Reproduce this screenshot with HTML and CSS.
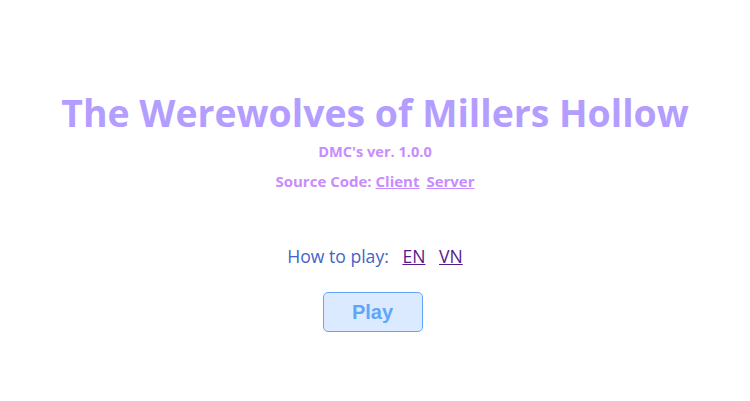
FILE: index.html
```html
<!DOCTYPE html>
<html>
<head>
<meta charset="utf-8">
<link rel="stylesheet" href="styles.css">
</head>
<body>
<main class="home">
  <h1 class="title">The Werewolves of Millers Hollow</h1>
  <p class="version">DMC's ver. 1.0.0</p>
  <p class="source">Source Code: <a href="#" class="src-link">Client</a> <a href="#" class="src-link src-link-2">Server</a></p>
  <p class="howto">How to play: <a href="#" class="howto-link">EN</a> <a href="#" class="howto-link">VN</a></p>
  <button class="play">Play</button>
</main>
</body>
</html>
```
FILE: styles.css
```css
html, body {
  margin: 0;
  padding: 0;
  background: #ffffff;
}
.home {
  display: flex;
  flex-direction: column;
  align-items: center;
  padding-top: 88px;
  font-family: "Open Sans", "Noto Sans", sans-serif;
}
.title {
  margin: 0;
  font-size: 37.4px;
  font-weight: 700;
  color: #b39dff;
  line-height: 50px;
}
.version {
  margin: 3px 0 0;
  font-size: 14.6px;
  font-weight: 700;
  color: #c88cff;
  line-height: 20px;
}
.source {
  margin: 10px 0 0;
  font-size: 15px;
  font-weight: 700;
  color: #c88cff;
  line-height: 20px;
}
.src-link {
  color: #c88cff;
}
.src-link-2 {
  margin-left: 3px;
}
.howto {
  margin: 53px 0 0;
  font-size: 17.6px;
  color: #4563c8;
  line-height: 24px;
}
.howto-link {
  margin-left: 9px;
  color: #551a8b;
}
.play {
  margin: 24px 5px 0 0;
  width: 100px;
  height: 40px;
  border: 1px solid #60a5fa;
  border-radius: 5px;
  background: #dbeafe;
  color: #60a5fa;
  font-family: "Liberation Sans", Arial, sans-serif;
  font-size: 20px;
  font-weight: 700;
}
```
